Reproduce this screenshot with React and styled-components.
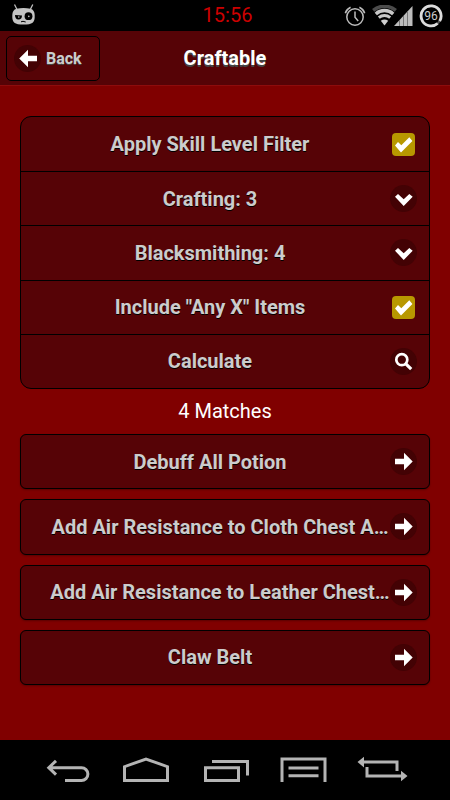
import React from "react";
import styled, { createGlobalStyle, css } from "styled-components";

const GlobalStyle = createGlobalStyle`
  * {
    box-sizing: border-box;
  }
  body {
    margin: 0;
    background: #800000;
    font-family: Roboto, sans-serif;
    color: #ffffff;
  }
  button,
  select,
  input {
    font: inherit;
    margin: 0;
  }
`;

const Screen = styled.div`
  display: flex;
  flex-direction: column;
  min-height: 100vh;
`;

const StatusBar = styled.div`
  display: grid;
  grid-template-columns: 1fr auto 1fr;
  align-items: center;
  height: 31px;
  padding: 0 7px 0 12px;
  background: #000000;
`;

const Clock = styled.time`
  font-size: 20px;
  line-height: 31px;
  color: #cc0000;
`;

const StatusIcons = styled.div`
  display: flex;
  justify-content: flex-end;
  align-items: center;
  gap: 6px;

  svg {
    display: block;
  }
`;

const Header = styled.header`
  display: grid;
  grid-template-columns: 1fr auto 1fr;
  align-items: center;
  height: 55px;
  padding: 0 6px;
  background: #560306;
  border-bottom: 1px solid #8e0c0c;
`;

const Title = styled.h1`
  margin: 0;
  font-size: 20px;
  line-height: 24px;
  font-weight: 700;
  text-shadow: 0 2px 0 #444444;
`;

const BackButton = styled.button`
  justify-self: start;
  display: flex;
  align-items: center;
  gap: 5px;
  height: 45px;
  padding: 0 17px 0 7px;
  border: 1px solid #000000;
  border-radius: 5px;
  background: #560306;
  color: #cccccc;
  font-size: 16px;
  font-weight: 700;
  text-shadow: 0 1px 0 #444444;
`;

const Content = styled.main`
  flex: 1;
  padding: 30px 20px;
`;

const Filters = styled.form`
  display: grid;
  grid-auto-rows: 1fr;
  min-height: 273px;
  overflow: hidden;
  background: #560306;
  border: 1px solid #000000;
  border-radius: 11px;
`;

const rowText = css`
  color: #cccccc;
  font-size: 20px;
  line-height: 24px;
  font-weight: 700;
  text-align: center;
  text-shadow: 0 1px 0 #000000;
`;

const Row = styled.div`
  display: grid;
  grid-template-columns: 100%;
  align-items: center;

  & > * {
    grid-area: 1 / 1;
  }
  & + & {
    border-top: 1px solid #000000;
  }
`;

const RowLabel = styled.label`
  ${rowText}
  padding: 0 48px 0 18px;
`;

const RowButton = styled.button`
  ${rowText}
  height: 100%;
  padding: 0 48px 0 18px;
  border: none;
  background: none;
`;

const RowSelect = styled.select`
  ${rowText}
  appearance: none;
  height: 100%;
  width: 100%;
  padding: 0 48px 0 18px;
  border: none;
  background: none;
  text-align-last: center;
`;

const CheckHolder = styled.span`
  justify-self: end;
  display: grid;
  margin-right: 14px;

  & > * {
    grid-area: 1 / 1;
  }
  svg {
    display: none;
    pointer-events: none;
  }
  input:checked + svg {
    display: block;
  }
`;

const CheckInput = styled.input`
  appearance: none;
  width: 23px;
  height: 23px;
  border-radius: 4px;
  background: #420204;

  &:checked {
    background: #b89800;
  }
`;

const Disc = styled.span`
  justify-self: end;
  flex: none;
  width: 27px;
  height: 27px;
  margin-right: ${({ $inset }) => ($inset ? "12px" : "0")};
  border-radius: 50%;
  background: #430204;
  pointer-events: none;

  svg {
    display: block;
  }
`;

const Matches = styled.p`
  margin: 0;
  font-size: 20px;
  line-height: 45px;
  text-align: center;
`;

const Results = styled.nav`
  display: grid;
  grid-auto-rows: 1fr;
  gap: 10px;
  min-height: 251px;
`;

const ResultLink = styled.a`
  display: grid;
  grid-template-columns: 100%;
  align-items: center;
  background: #560306;
  border: 1px solid #000000;
  border-radius: 6px;
  box-shadow: 0 1px 2px rgba(0, 0, 0, 0.3);
  text-decoration: none;

  & > * {
    grid-area: 1 / 1;
  }
`;

const ResultText = styled.span`
  ${rowText}
  padding: ${({ $long }) => ($long ? "0 28px 0 18px" : "0 48px 0 18px")};
  white-space: nowrap;
`;

const NavBar = styled.footer`
  display: flex;
  height: 60px;
  padding: 0 28px;
  background: #000000;
`;

const NavButton = styled.button`
  flex: 1;
  display: flex;
  justify-content: center;
  align-items: center;
  padding: 0;
  border: none;
  background: none;

  svg {
    flex: none;
  }
`;

const shapes = {
  down: <path fill="#fff" d="M5 11.7 8 9l5.7 5.3L19.3 9l3.4 2.7-9 9.3z" />,
  right: <path fill="#fff" d="M5 10.7h9v-6l8.7 8.8-8.7 8.8v-6H5z" />,
  left: <path fill="#fff" d="M23 10.7h-9v-6l-8.8 8.8 8.8 8.8v-6h9z" />,
  search: (
    <g fill="none" stroke="#fff">
      <circle cx="11.8" cy="11.7" r="5.5" strokeWidth="2.7" />
      <path d="M15.6 15.6 21.2 21.2" strokeWidth="3.2" />
    </g>
  ),
};

const DiscIcon = ({ shape, inset }) => (
  <Disc $inset={inset}>
    <svg width="27" height="27" viewBox="0 0 27 27" aria-hidden="true">
      {shapes[shape]}
    </svg>
  </Disc>
);

const CheckRow = ({ id, label }) => (
  <Row>
    <RowLabel htmlFor={id}>{label}</RowLabel>
    <CheckHolder>
      <CheckInput type="checkbox" id={id} defaultChecked />
      <svg width="23" height="23" viewBox="0 0 23 23" aria-hidden="true">
        <path fill="#fff" d="M17.3 4.3 20.4 8 9 19.4l-6-7L6 9l3.3 3.3z" />
      </svg>
    </CheckHolder>
  </Row>
);

const SelectRow = ({ skill, level }) => (
  <Row>
    <RowSelect aria-label={skill} defaultValue={level}>
      <option value={level}>{`${skill}: ${level}`}</option>
    </RowSelect>
    <DiscIcon shape="down" inset />
  </Row>
);

const RobotIcon = () => (
  <svg width="23" height="24" viewBox="1 1 23 24" aria-hidden="true">
    <path d="M3.5 1.5 6 6.5M21.8 1.5 19.3 6.5" stroke="#bdbdbd" strokeWidth="1.3" />
    <path
      fill="#c4c4c4"
      d="M5.5 5.8Q12.5 4 19.5 5.8Q23.6 7 23.7 12Q24 18 21.6 19.7Q19 21.6 12.5 21.6Q6 21.6 3.4 19.7Q1 18 1.3 12Q1.4 7 5.5 5.8z"
    />
    <path fill="#000" d="M4 12 11 12.6Q11 16.6 7.4 16.6Q4 16.2 4 12z" />
    <circle cx="17.5" cy="13.2" r="3.9" fill="#000" />
    <circle cx="7.8" cy="14" r="0.8" fill="#c4c4c4" />
    <circle cx="17.8" cy="13.4" r="0.8" fill="#c4c4c4" />
    <path d="M10 18.8 12 18.3 14.7 19" stroke="#000" fill="none" />
  </svg>
);

const AlarmIcon = () => (
  <svg width="22" height="22" viewBox="0 0 22 22" aria-hidden="true">
    <g fill="none" stroke="#bcbcbc" strokeWidth="1.5">
      <circle cx="11" cy="12" r="8.2" />
      <path d="M11 6.5V12.3L14.2 16" />
      <path d="M1.3 8.2A10 10 0 0 1 6.6 2.2M20.7 8.2A10 10 0 0 0 15.4 2.2" />
    </g>
  </svg>
);

const SignalIcon = () => (
  <svg width="41" height="22" viewBox="0 0 41 22" aria-hidden="true">
    <g fill="none" strokeWidth="3.4">
      <path stroke="#4c4c4c" d="M1.2 5.4A17.3 17.3 0 0 1 23.8 5.4" />
      <path stroke="#c8c8c8" d="M3.8 8.9A13 13 0 0 1 21.2 8.9" />
      <path stroke="#c8c8c8" strokeWidth="3" d="M6.8 12.6A8.8 8.8 0 0 1 18.2 12.6" />
    </g>
    <path fill="#d0d0d0" d="M12.5 20.6 8.8 15.8Q12.5 13 16.2 15.8z" />
    <path fill="#bdbdbd" d="M22 21 40.5 1V21z" />
    <path
      stroke="#777"
      strokeWidth="1"
      d="M27.5 15V21M31.5 11V21M35.5 6.5V21"
    />
  </svg>
);

const BatteryIcon = () => (
  <svg width="24" height="24" viewBox="0 0 24 24" aria-hidden="true">
    <circle cx="12" cy="12" r="10" fill="none" stroke="#555" strokeWidth="2" />
    <path
      d="M18.6 19.5A10 10 0 1 1 20.7 17"
      fill="none"
      stroke="#dcdcdc"
      strokeWidth="2.8"
    />
    <text
      x="12"
      y="16"
      textAnchor="middle"
      fontFamily="Roboto, sans-serif"
      fontSize="12"
      fill="#cccccc"
    >
      96
    </text>
  </svg>
);

const navItems = [
  {
    name: "Back",
    d: "M14 4.8 6.8 11.7 14 18.6M6.8 11.7H39.5A6.4 6.4 0 0 1 39.5 24.5H23",
  },
  { name: "Home", d: "M3.5 24.5V10.7L25 3L46.5 10.7V24.5z" },
  { name: "Recent apps", d: "M5.5 11.7H38.5V24.5H5.5zM12 5.5H47.5V19.5" },
  { name: "Menu", d: "M3 26V3H46V26M9.5 12H39.5M9.5 19.8H39.5" },
  {
    name: "Rotate",
    d: "M5 6H39V15M9 11V20H43",
    heads: "M-.5 6 6 .8V11.4zM49.5 20 43 14.8V25.2z",
  },
];

const results = [
  { name: "Debuff All Potion" },
  { name: "Add Air Resistance to Cloth Chest A…", long: true },
  { name: "Add Air Resistance to Leather Chest…", long: true },
  { name: "Claw Belt" },
];

const App = () => {
  return (
    <Screen>
      <GlobalStyle />
      <StatusBar>
        <RobotIcon />
        <Clock>15:56</Clock>
        <StatusIcons>
          <AlarmIcon />
          <SignalIcon />
          <BatteryIcon />
        </StatusIcons>
      </StatusBar>

      <Header>
        <BackButton type="button">
          <DiscIcon shape="left" />
          Back
        </BackButton>
        <Title>Craftable</Title>
      </Header>

      <Content>
        <Filters onSubmit={(e) => e.preventDefault()}>
          <CheckRow id="skill-filter" label="Apply Skill Level Filter" />
          <SelectRow skill="Crafting" level="3" />
          <SelectRow skill="Blacksmithing" level="4" />
          <CheckRow id="any-items" label={'Include "Any X" Items'} />
          <Row>
            <RowButton type="submit">Calculate</RowButton>
            <DiscIcon shape="search" inset />
          </Row>
        </Filters>

        <Matches>{results.length} Matches</Matches>

        <Results>
          {results.map(({ name, long }) => (
            <ResultLink href="#" key={name}>
              <ResultText $long={long}>{name}</ResultText>
              <DiscIcon shape="right" inset />
            </ResultLink>
          ))}
        </Results>
      </Content>

      <NavBar>
        {navItems.map(({ name, d, heads }) => (
          <NavButton type="button" aria-label={name} key={name}>
            <svg width="50" height="28" viewBox="0 0 50 28" overflow="visible">
              <path d={d} fill="none" stroke="#b4b4b4" strokeWidth="3" />
              {heads && <path d={heads} fill="#b4b4b4" />}
            </svg>
          </NavButton>
        ))}
      </NavBar>
    </Screen>
  );
};

export default App;
